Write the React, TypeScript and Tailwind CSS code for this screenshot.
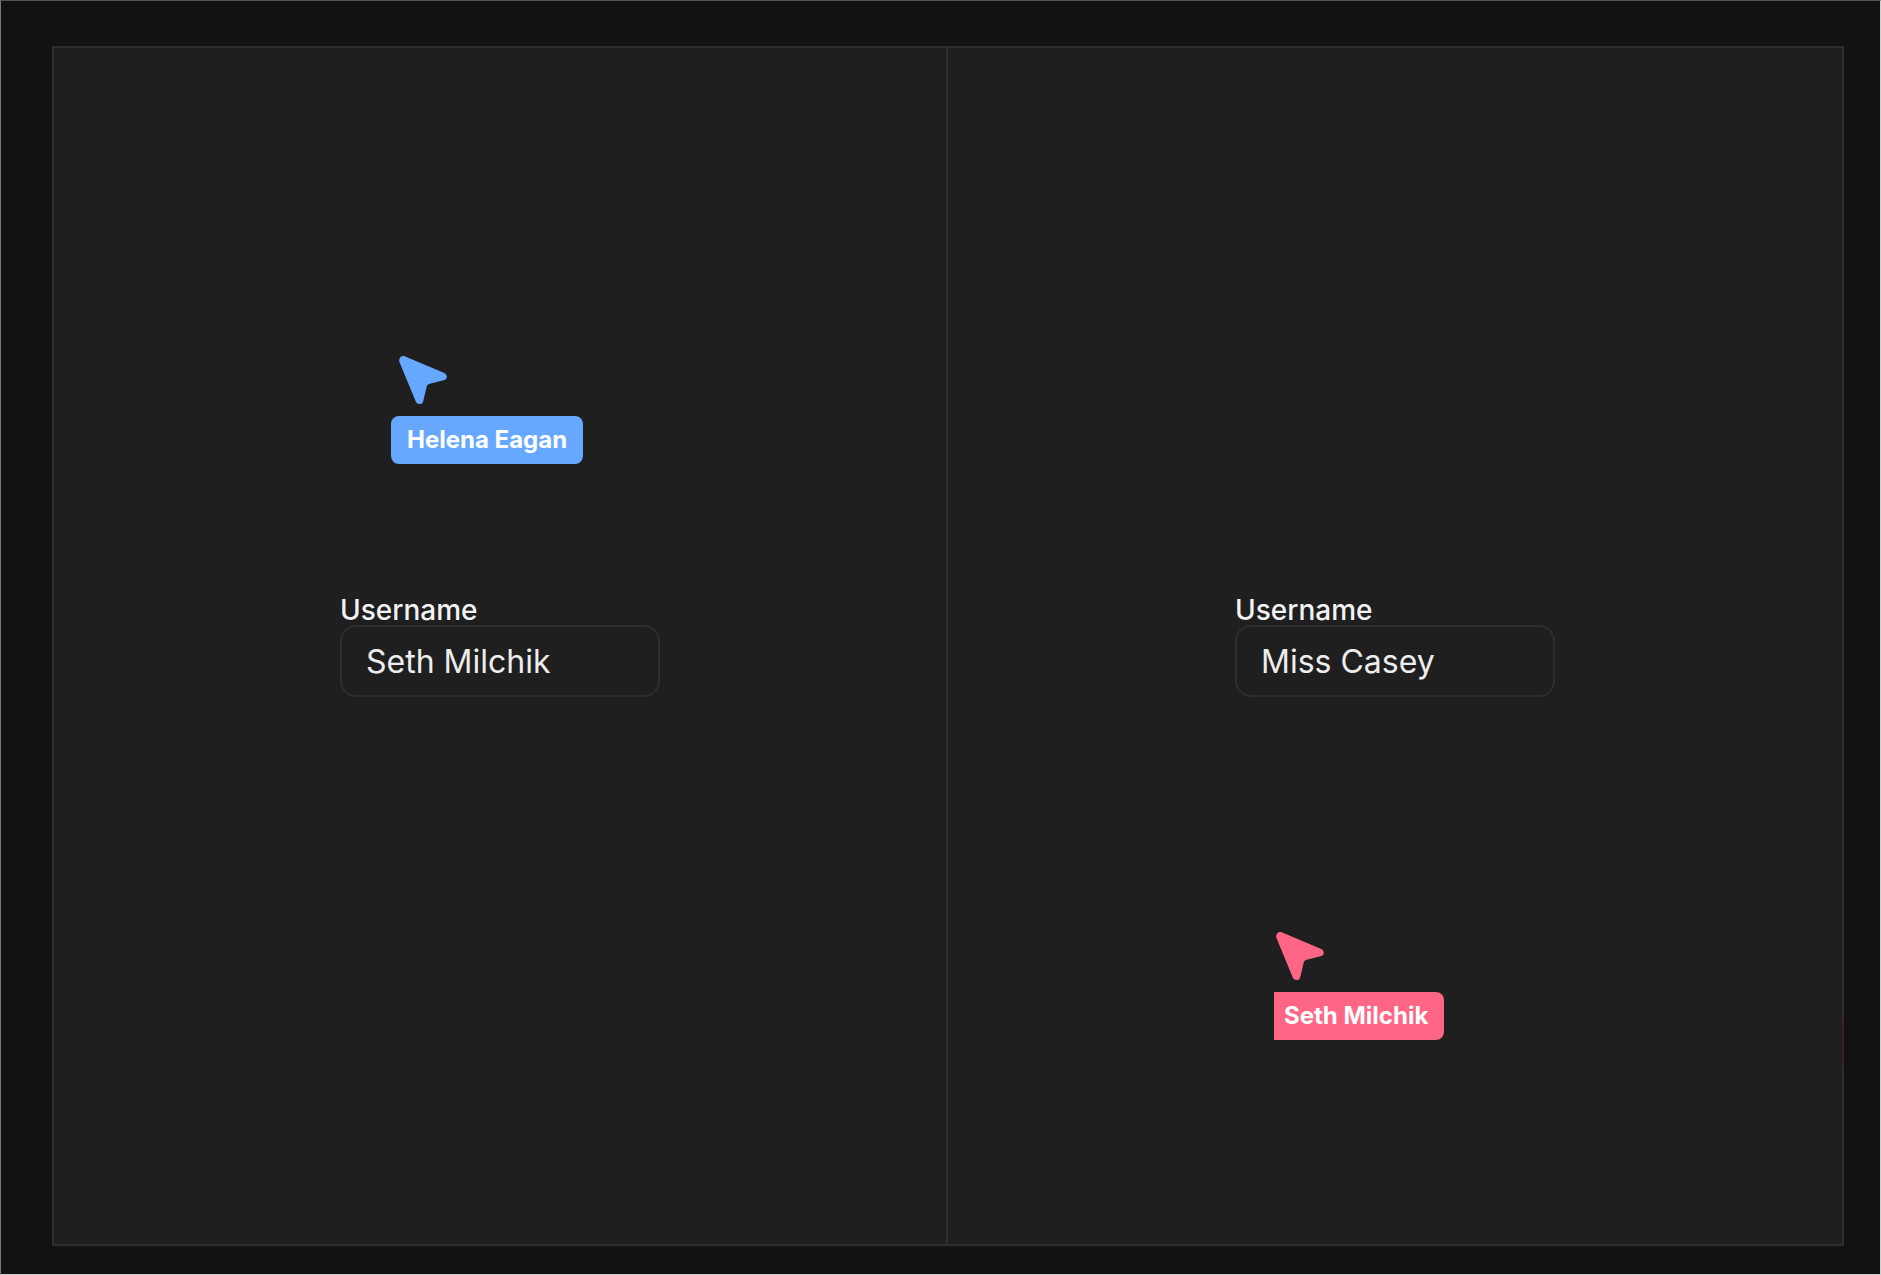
import { useId, useState } from "react";

function CursorArrow() {
  return (
    <svg width="48" height="48" viewBox="0 0 144 144" fill="currentColor" aria-hidden="true">
      <path d="M1 17 C-2 7 7 -3 17 1 L134 50 C147 55 146 70 134 73 L92 83 C87 84 84 87 83 92 L73 134 C71 147 55 148 50 136 Z" />
    </svg>
  );
}

function Field({ initial }: { initial: string }) {
  const id = useId();
  const [name, setName] = useState(initial);
  return (
    <div className="flex w-80 flex-col">
      <label htmlFor={id} className="text-[28px] leading-[30px] font-medium text-[#f2f2f2]">
        Username
      </label>
      <input
        id={id}
        value={name}
        onChange={(e) => setName(e.target.value)}
        className="h-[72px] w-full rounded-2xl border-2 border-[#2e2e2e] bg-transparent px-6 text-[32px] text-[#ededed] outline-none"
      />
    </div>
  );
}

export default function App() {
  return (
    <div className="flex min-h-screen flex-col border border-t-[#555555] border-r-[#d0d0d0] border-b-[#d0d0d0] border-l-[#777777] bg-[#121212] pt-[45px] pr-9 pb-7 pl-[51px] font-['Inter',sans-serif]">
      <main className="grid flex-1 grid-cols-2 divide-x-2 divide-[#2e2e2e] border-2 border-[#2e2e2e] bg-[#1f1f1f]">
        <section className="relative flex items-center justify-center">
          <Field initial="Seth Milchik" />
          <div className="absolute top-[308px] left-[337px] text-[#66a8ff]">
            <div className="pl-2">
              <CursorArrow />
            </div>
            <div className="mt-3 rounded-lg bg-current px-4">
              <span className="block text-2xl leading-[48px] font-bold whitespace-nowrap text-white">Helena Eagan</span>
            </div>
          </div>
        </section>
        <section className="relative flex items-center justify-center">
          <Field initial="Miss Casey" />
          <div className="absolute top-[884px] left-[326px] overflow-hidden text-[#ff6685]">
            <div className="pl-0.5">
              <CursorArrow />
            </div>
            <div className="mt-3 -ml-1.5 rounded-lg bg-current px-4">
              <span className="block text-2xl leading-[48px] font-bold whitespace-nowrap text-white">Seth Milchik</span>
            </div>
          </div>
          <span className="absolute top-[971px] -right-0.5 h-[46px] w-0.5 bg-[#451d26]" />
        </section>
      </main>
    </div>
  );
}
